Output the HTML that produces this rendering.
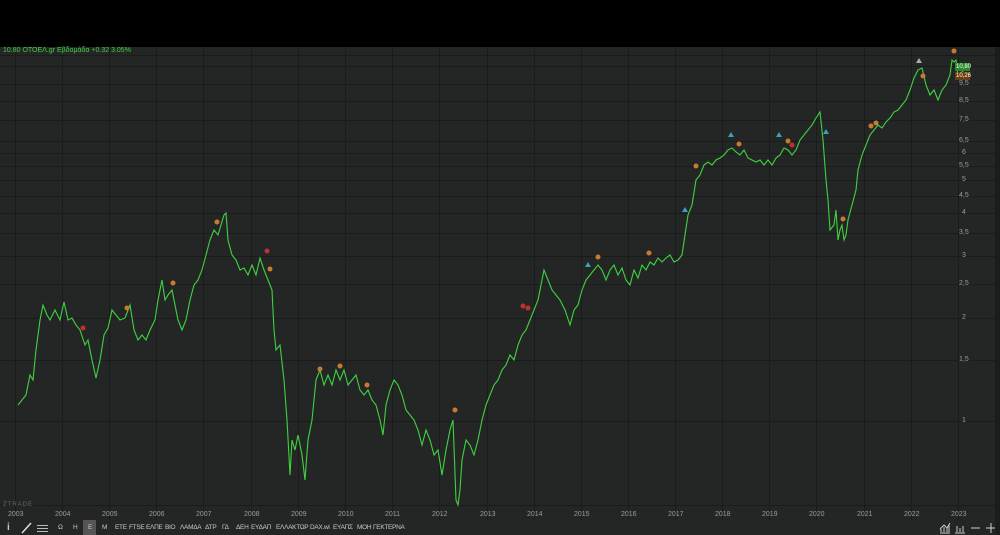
<!DOCTYPE html>
<html><head><meta charset="utf-8"><style>
body{margin:0;width:1000px;height:535px;background:#242626;overflow:hidden;font-family:"Liberation Sans",sans-serif;position:relative}
.top{position:absolute;left:0;top:0;width:1000px;height:47px;background:#000}
.side{position:absolute;left:995px;top:47px;width:5px;height:488px;background:#1b1c1c}
.t{position:absolute;font-size:7px;color:#9a9c9c;white-space:nowrap}
.tb{position:absolute;top:520px;height:15px;left:0;width:1000px;background:#242626}
.tb span{position:absolute;top:4px;font-size:6.5px;color:#c8c8c8;letter-spacing:-0.3px;white-space:nowrap}
</style></head><body>
<div class="top"></div>
<svg width="1000" height="535" style="position:absolute;left:0;top:0">
<g stroke="#1a1b1b" stroke-width="1">
<line x1="0" y1="55.5" x2="995" y2="55.5"/><line x1="0" y1="66.5" x2="995" y2="66.5"/><line x1="0" y1="84.5" x2="995" y2="84.5"/><line x1="0" y1="101.5" x2="995" y2="101.5"/><line x1="0" y1="120.5" x2="995" y2="120.5"/><line x1="0" y1="141.5" x2="995" y2="141.5"/><line x1="0" y1="153.5" x2="995" y2="153.5"/><line x1="0" y1="166.5" x2="995" y2="166.5"/><line x1="0" y1="180.5" x2="995" y2="180.5"/><line x1="0" y1="196.5" x2="995" y2="196.5"/><line x1="0" y1="213.5" x2="995" y2="213.5"/><line x1="0" y1="233.5" x2="995" y2="233.5"/><line x1="0" y1="256.5" x2="995" y2="256.5"/><line x1="0" y1="284.5" x2="995" y2="284.5"/><line x1="0" y1="318.5" x2="995" y2="318.5"/><line x1="0" y1="360.5" x2="995" y2="360.5"/><line x1="0" y1="421.5" x2="995" y2="421.5"/><line x1="0" y1="505.5" x2="995" y2="505.5"/>
<line x1="15.5" y1="47" x2="15.5" y2="520"/><line x1="62.5" y1="47" x2="62.5" y2="520"/><line x1="109.5" y1="47" x2="109.5" y2="520"/><line x1="156.5" y1="47" x2="156.5" y2="520"/><line x1="203.5" y1="47" x2="203.5" y2="520"/><line x1="251.5" y1="47" x2="251.5" y2="520"/><line x1="298.5" y1="47" x2="298.5" y2="520"/><line x1="345.5" y1="47" x2="345.5" y2="520"/><line x1="392.5" y1="47" x2="392.5" y2="520"/><line x1="439.5" y1="47" x2="439.5" y2="520"/><line x1="487.5" y1="47" x2="487.5" y2="520"/><line x1="534.5" y1="47" x2="534.5" y2="520"/><line x1="581.5" y1="47" x2="581.5" y2="520"/><line x1="628.5" y1="47" x2="628.5" y2="520"/><line x1="675.5" y1="47" x2="675.5" y2="520"/><line x1="722.5" y1="47" x2="722.5" y2="520"/><line x1="769.5" y1="47" x2="769.5" y2="520"/><line x1="816.5" y1="47" x2="816.5" y2="520"/><line x1="864.5" y1="47" x2="864.5" y2="520"/><line x1="911.5" y1="47" x2="911.5" y2="520"/><line x1="958.5" y1="47" x2="958.5" y2="520"/>
</g>
<polyline fill="none" stroke="#3fd23f" stroke-width="1.1" points="18,405 22,400 26,395 30,375 33,380 36,350 40,320 43,305 47,315 50,320 55,310 60,320 64,302 68,320 72,318 76,325 80,330 85,345 88,340 92,360 96,378 100,360 104,335 108,328 112,310 116,315 120,320 125,318 130,305 134,330 138,340 142,335 146,340 150,330 155,320 158,300 162,280 165,300 168,295 172,290 175,305 178,320 182,330 186,320 190,300 194,285 198,280 202,270 206,255 210,240 214,230 218,235 221,225 224,215 226,213 228,240 232,255 236,260 240,270 244,268 248,275 252,265 256,275 260,258 264,270 268,280 272,290 274,330 276,350 280,345 284,380 287,420 290,475 292,440 295,450 298,435 302,455 305,480 308,440 312,420 316,380 320,370 324,385 328,375 332,385 336,370 340,380 344,370 348,385 352,380 356,375 360,390 364,395 368,390 372,400 376,405 380,420 383,435 386,405 390,390 394,380 398,385 402,395 406,410 410,415 414,420 418,430 422,445 426,430 430,440 434,455 438,450 442,475 446,450 450,430 453,420 456,500 458,505 460,490 462,460 466,440 470,445 474,455 478,440 482,420 486,405 490,395 494,385 498,380 502,370 506,365 510,355 514,360 518,345 522,335 526,330 530,320 534,310 538,300 541,285 544,270 548,280 552,290 556,295 560,300 565,310 570,325 574,310 578,305 582,290 586,280 590,275 594,270 598,265 602,270 606,280 610,270 614,265 618,275 622,268 626,280 630,285 634,270 638,278 642,265 646,270 650,262 654,265 658,258 662,262 666,258 670,255 674,262 678,260 682,255 685,235 688,215 692,205 696,180 700,175 704,165 708,162 712,165 716,160 720,158 724,155 728,150 732,148 736,152 740,155 744,150 748,158 752,160 756,162 760,160 764,165 768,160 772,165 776,158 780,155 784,148 788,150 792,155 796,150 800,140 804,135 808,130 812,125 816,118 820,112 823,140 826,180 828,200 830,230 834,225 836,210 838,240 840,230 842,225 844,240 846,235 848,220 852,205 856,190 858,170 862,155 866,145 870,135 874,130 878,125 882,128 886,122 890,118 894,112 898,110 902,105 906,100 910,90 914,78 918,70 922,68 926,85 930,95 934,90 938,100 942,90 946,85 950,75 952,60 954,62 956,60 958,75 962,72 966,68"/>
<g fill="#c87a30">
<circle cx="127" cy="308" r="2.5"/><circle cx="173" cy="283" r="2.5"/><circle cx="217" cy="222" r="2.5"/><circle cx="270" cy="269" r="2.5"/><circle cx="320" cy="369" r="2.5"/><circle cx="340" cy="366" r="2.5"/><circle cx="367" cy="385" r="2.5"/><circle cx="455" cy="410" r="2.5"/><circle cx="598" cy="257" r="2.5"/><circle cx="649" cy="253" r="2.5"/><circle cx="696" cy="166" r="2.5"/><circle cx="739" cy="144" r="2.5"/><circle cx="788" cy="141" r="2.5"/><circle cx="843" cy="219" r="2.5"/><circle cx="871" cy="126" r="2.5"/><circle cx="876" cy="123" r="2.5"/><circle cx="923" cy="76" r="2.5"/><circle cx="954" cy="51" r="2.5"/>
</g>
<g fill="#c03030"><circle cx="83" cy="328" r="2.5"/><circle cx="267" cy="251" r="2.5"/><circle cx="523" cy="306" r="2.5"/><circle cx="528" cy="308" r="2.5"/><circle cx="792" cy="145" r="2.5"/></g>
<g fill="#3aa0c0"><path d="M588 262l3 5h-6z"/><path d="M731 132l3 5h-6z"/><path d="M779 132l3 5h-6z"/><path d="M826 129l3 5h-6z"/><path d="M685 207l3 5h-6z"/></g>
<path d="M919 58l3 5h-6z" fill="#aaa"/>
<rect x="955" y="63" width="15" height="8" fill="#2a8a2a"/>
<rect x="955" y="72" width="15" height="8" fill="#6a3e10"/>
</svg>
<div class="t" style="left:3px;top:47px;color:#3fd23f">10.80 ΟΤΟΕΛ.gr Εβδομάδα +0.32 3.05%</div>
<div class="t" style="left:956px;top:64px;color:#fff;font-size:6px">10,80</div>
<div class="t" style="left:956px;top:73px;color:#fff;font-size:6px">10,26</div>
<div class="t" style="left:959px;top:80px">9,5</div><div class="t" style="left:959px;top:97px">8,5</div><div class="t" style="left:959px;top:116px">7,5</div><div class="t" style="left:959px;top:137px">6,5</div><div class="t" style="left:962px;top:149px">6</div><div class="t" style="left:959px;top:162px">5,5</div><div class="t" style="left:962px;top:176px">5</div><div class="t" style="left:959px;top:192px">4,5</div><div class="t" style="left:962px;top:209px">4</div><div class="t" style="left:959px;top:229px">3,5</div><div class="t" style="left:962px;top:252px">3</div><div class="t" style="left:959px;top:280px">2,5</div><div class="t" style="left:962px;top:314px">2</div><div class="t" style="left:959px;top:356px">1,5</div><div class="t" style="left:962px;top:417px">1</div>
<div class="t" style="left:3px;top:502px;font-size:6px;color:#666;letter-spacing:1px">ZTRADE</div>
<div class="t" style="left:8px;top:511px">2003</div><div class="t" style="left:55px;top:511px">2004</div><div class="t" style="left:102px;top:511px">2005</div><div class="t" style="left:149px;top:511px">2006</div><div class="t" style="left:196px;top:511px">2007</div><div class="t" style="left:244px;top:511px">2008</div><div class="t" style="left:291px;top:511px">2009</div><div class="t" style="left:338px;top:511px">2010</div><div class="t" style="left:385px;top:511px">2011</div><div class="t" style="left:432px;top:511px">2012</div><div class="t" style="left:480px;top:511px">2013</div><div class="t" style="left:527px;top:511px">2014</div><div class="t" style="left:574px;top:511px">2015</div><div class="t" style="left:621px;top:511px">2016</div><div class="t" style="left:668px;top:511px">2017</div><div class="t" style="left:715px;top:511px">2018</div><div class="t" style="left:762px;top:511px">2019</div><div class="t" style="left:809px;top:511px">2020</div><div class="t" style="left:857px;top:511px">2021</div><div class="t" style="left:904px;top:511px">2022</div><div class="t" style="left:951px;top:511px">2023</div>
<div class="tb">
<span style="left:7px;top:2px;font-size:10px;font-weight:bold">i</span>
<svg width="14" height="14" style="position:absolute;left:20px;top:1px"><line x1="2" y1="12" x2="11" y2="2" stroke="#ddd" stroke-width="1.5"/></svg>
<svg width="14" height="14" style="position:absolute;left:36px;top:1px" stroke="#bbb"><line x1="1" y1="4.5" x2="12" y2="4.5"/><line x1="1" y1="7.5" x2="12" y2="7.5"/><line x1="1" y1="10.5" x2="12" y2="10.5"/></svg>
<div style="position:absolute;left:83px;top:0;width:13px;height:15px;background:#555"></div>
<span style="left:58px">Ω</span><span style="left:73px">Η</span><span style="left:88px">Ε</span><span style="left:102px">Μ</span><span style="left:115px">ΕΤΕ</span><span style="left:129px">FTSE</span><span style="left:146px">ΕΛΠΕ</span><span style="left:165px">ΒΙΟ</span><span style="left:180px">ΛΑΜΔΑ</span><span style="left:205px">ΔΤΡ</span><span style="left:222px">ΓΔ</span><span style="left:236px">ΔΕΗ</span><span style="left:251px">ΕΥΔΑΠ</span><span style="left:276px">ΕΛΛΑΚΤΩΡ</span><span style="left:310px">DAX.wi</span><span style="left:333px">ΕΥΑΠΣ</span><span style="left:357px">ΜΟΗ</span><span style="left:373px">ΓΕΚΤΕΡΝΑ</span>
<svg width="60" height="15" style="position:absolute;left:938px;top:0" stroke="#ccc" fill="none"><path d="M2 13h10M3 12v-3M6 12v-5M9 12v-4M11 12v-7M2 9l4-4 3 3 3-5"/><path d="M17 13h10M19 12v-6M22 12v-4M25 12v-6"/><line x1="33" y1="8" x2="42" y2="8"/><line x1="48" y1="8" x2="58" y2="8"/><line x1="53" y1="3" x2="53" y2="13"/></svg>
</div>
<div class="side"></div>
</body></html>
